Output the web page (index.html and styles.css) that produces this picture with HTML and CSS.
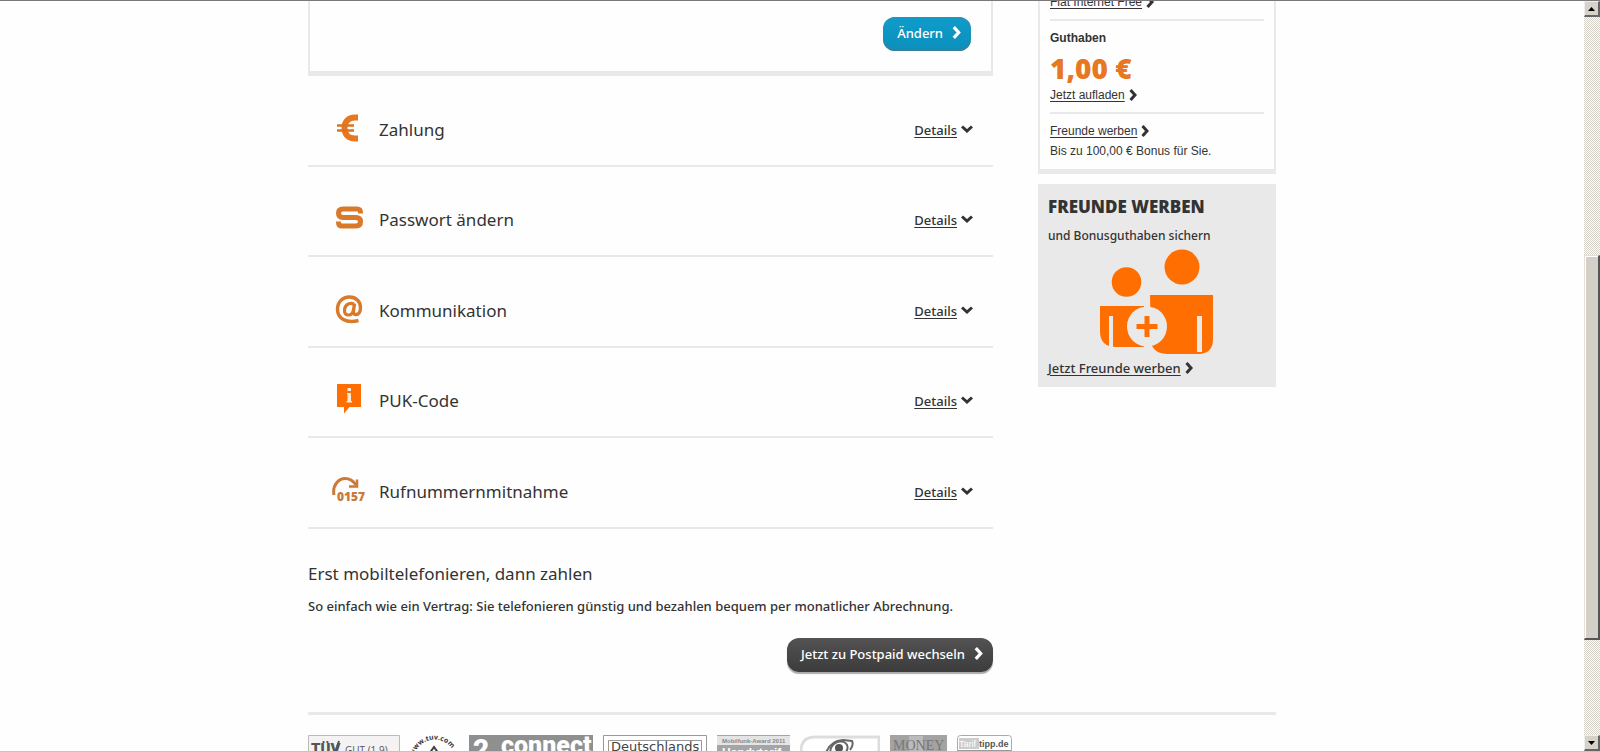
FILE: index.html
```html
<!DOCTYPE html>
<html lang="de">
<head>
<meta charset="utf-8">
<title>Meine Daten</title>
<link rel="stylesheet" href="styles.css">
</head>
<body>
<svg class="defs" aria-hidden="true">
  <symbol id="right" viewBox="0 0 8 12"><path d="M1.5 1 6 6l-4.500 5" fill="none" stroke="currentColor" stroke-width="3"/></symbol>
  <symbol id="down" viewBox="0 0 12 8"><path d="M1 1.500 6 6l5-4.500" fill="none" stroke="currentColor" stroke-width="3"/></symbol>
</svg>
<div class="window">
  <div class="viewport">
    <div class="page">
      <div class="columns">
        <main class="main">
          <section class="panel">
            <button class="btn btn-blue" type="button">Ändern <svg class="chev-btn"><use href="#right"/></svg></button>
          </section>
          <ul class="rows">
            <li class="row">
              <svg class="row-icon" viewBox="0 0 34 34"><path d="M26 6.500h-3C16 6.500 12.500 11 12.500 17S16 27.500 23 27.500h3" fill="none" stroke="#e87722" stroke-width="6"/><path d="M5 14.500h17M5 19.500h17" stroke="#d9751f" stroke-width="2.500"/></svg>
              <h2 class="row-title">Zahlung</h2>
              <a class="link" href="#"><span>Details</span><svg class="chev-down"><use href="#down"/></svg></a>
            </li>
            <li class="row">
              <svg class="row-icon" viewBox="0 0 34 34"><path d="M28.500 12.500V11.500Q28.500 8 25 8H11Q6.500 8 6.500 12 6.500 16.500 11 16.500H24Q28.500 16.500 28.500 20.500 28.500 25 24 25H10Q6.500 25 6.500 21.500V20.500" fill="none" stroke="#d97a2b" stroke-width="5"/></svg>
              <h2 class="row-title">Passwort ändern</h2>
              <a class="link" href="#"><span>Details</span><svg class="chev-down"><use href="#down"/></svg></a>
            </li>
            <li class="row">
              <svg class="row-icon" viewBox="0 0 34 34"><g fill="none" stroke="#d97a2b"><path d="M26.500 28.500C14 32 5.500 26 5.500 17.500 5.500 10 10.500 5 17.500 5 24 5 28.500 9.500 28.500 15.500 28.500 20 26.500 22.500 24 22.500 21.500 22.500 21 21 21.500 18.500L22.500 11.500" stroke-width="3.400"/><path d="M22 12C16.500 10 12.500 13.500 12.500 18.500 12.500 21.500 14 23 16.500 23 19.500 23 21 20.500 21.500 18" stroke-width="3.200"/></g></svg>
              <h2 class="row-title">Kommunikation</h2>
              <a class="link" href="#"><span>Details</span><svg class="chev-down"><use href="#down"/></svg></a>
            </li>
            <li class="row">
              <svg class="row-icon" viewBox="0 0 34 34"><path d="M5 2h24v23H17.500L12 31.500V25H5z" fill="#ff6e00"/><path d="M15.500 6h3.500v3h-3.500zM15 11h4v8h1v1.500h-5.500v-1.500h1v-6.500H15z" fill="#ffe9d4"/></svg>
              <h2 class="row-title">PUK-Code</h2>
              <a class="link" href="#"><span>Details</span><svg class="chev-down"><use href="#down"/></svg></a>
            </li>
            <li class="row">
              <svg class="row-icon" viewBox="0 0 34 34"><path d="M2 22C0 12 7 5.500 13 5.500 18 5.500 21 7.500 24 12" fill="none" stroke="#c97a3d" stroke-width="3"/><path d="M25 6.500V13.500H17" fill="none" stroke="#c97a3d" stroke-width="2.500"/><text x="5" y="28" class="num">0157</text></svg>
              <h2 class="row-title">Rufnummernmitnahme</h2>
              <a class="link" href="#"><span>Details</span><svg class="chev-down"><use href="#down"/></svg></a>
            </li>
          </ul>
          <section class="postpaid">
            <h2 class="postpaid-title">Erst mobiltelefonieren, dann zahlen</h2>
            <p class="postpaid-text">So einfach wie ein Vertrag: Sie telefonieren günstig und bezahlen bequem per monatlicher Abrechnung.</p>
            <button class="btn btn-dark" type="button">Jetzt zu Postpaid wechseln <svg class="chev-btn"><use href="#right"/></svg></button>
          </section>
        </main>
        <aside class="side">
          <div class="account">
            <div class="account-part"><a class="link" href="#"><span>Flat Internet Free</span><svg class="chev"><use href="#right"/></svg></a></div>
            <div class="account-part">
              <h3 class="account-label">Guthaben</h3>
              <strong class="amount">1,00 €</strong>
              <a class="link" href="#"><span>Jetzt aufladen</span><svg class="chev"><use href="#right"/></svg></a>
            </div>
            <div class="account-part">
              <a class="link" href="#"><span>Freunde werben</span><svg class="chev"><use href="#right"/></svg></a>
              <p class="bonus">Bis zu 100,00 € Bonus für Sie.</p>
            </div>
          </div>
          <section class="promo">
            <h3 class="promo-title">FREUNDE WERBEN</h3>
            <p class="promo-text">und Bonusguthaben sichern</p>
            <svg class="friends" viewBox="0 0 114 106" fill="#ff6e00">
              <circle cx="26.500" cy="33" r="14.800"/><circle cx="82" cy="18" r="17.500"/>
              <path d="M0 57H44V98H16Q0 98 0 82zM50 46H113V90Q113 105 98 105H68Q54 105 51 94z"/>
              <path d="M9 67h4v32H9zM97 67h5v36H97z" fill="#e9e9e9"/>
              <circle cx="47" cy="77.500" r="20" fill="#e9e9e9"/>
              <path d="M44.500 67h5v8h8v5h-8v8h-5v-8h-8v-5h8z"/>
            </svg>
            <a class="link" href="#"><span>Jetzt Freunde werben</span><svg class="chev"><use href="#right"/></svg></a>
          </section>
        </aside>
      </div>
      <footer class="logos">
        <svg class="logo" width="92" height="30"><path d="M.5.500h91v40H.5z" fill="#f4f2f2" stroke="#bbb"/><text x="3" y="19" class="tuv">TÜV</text><path d="M26 20 31 6" stroke="#555" stroke-width="2"/><text x="37" y="19" class="gut">GUT (1,9)</text></svg>
        <svg class="logo" width="49" height="30"><path id="ring" d="M4 21A21 21 0 0 1 45 21" fill="none"/><text class="ring"><textPath href="#ring">www.tuv.com</textPath></text><path d="M14 26 24 12 34 26M20 18l8 8" fill="none" stroke="#444" stroke-width="2"/></svg>
        <svg class="logo" width="124" height="30"><path d="M0 0h124v30H0z" fill="#8f8f8f"/><text x="4" y="24" class="two">2</text><text x="32" y="19" class="connect">connect</text></svg>
        <svg class="logo" width="104" height="30"><path d="M.5.500h103v40H.5zM5.500 5.500h93v40h-93z" fill="#fff" stroke="#999"/><text x="8" y="16" class="deutsch">Deutschlands</text></svg>
        <svg class="logo" width="73" height="30"><path d="M0 0h73v30H0z" fill="#e4e4e4"/><path d="M0 0h73v1H0zM0 10h73v20H0z" fill="#a5a5a5"/><text x="5" y="8" class="award">Mobilfunk-Award 2011</text><text x="5" y="22" class="award-big">Handytarif</text></svg>
        <svg class="logo" width="80" height="30"><path d="M1 30V16Q1 2 15 2H79V30" fill="#fff" stroke="#ddd" stroke-width="3"/><g fill="none" stroke="#666" stroke-width="2"><ellipse cx="39" cy="14" rx="9" ry="7" transform="rotate(-30 39 14)"/><path d="M26 18Q30 6 43 5l9 1q2 4-2 9"/></g><circle cx="39" cy="13" r="4" fill="#555"/></svg>
        <svg class="logo" width="57" height="30"><path d="M0 0h57v30H0z" fill="#a3a3a3"/><path d="M19 1h14v18H19z" fill="#bbb"/><text x="3" y="15" class="money">MONEY</text></svg>
        <svg class="logo" width="55" height="30"><rect x=".5" y=".5" width="54" height="30" rx="3" fill="#fff" stroke="#aaa"/><path d="M2 3h20v11H2z" fill="#ccc"/><path d="M1 15h53v15H1z" fill="#999"/><text x="2" y="12" class="tarif" fill="#fff">Tarif</text><text x="22" y="12" class="tarif tipp" fill="#555">tipp.de</text></svg>
      </footer>
    </div>
  </div>
  <div class="scrollbar">
    <button class="sb-btn" type="button" aria-label="Nach oben"><svg width="7" height="4"><path d="M0 4 3.500 0 7 4z"/></svg></button>
    <div class="sb-track"><div class="sb-thumb"></div></div>
    <button class="sb-btn" type="button" aria-label="Nach unten"><svg width="7" height="4"><path d="M0 0 3.500 4 7 0z"/></svg></button>
  </div>
</div>
</body>
</html>
```

FILE: styles.css
```css
* { box-sizing: border-box; margin: 0; padding: 0; }
body { background: #fefefe; color: #333; font: 500 13px/20px "Noto Sans", sans-serif; }
.defs { display: none; }
.window { display: flex; height: 100vh; overflow: hidden; border-top: 1px solid #7b777b; border-bottom: 1px solid #c4c4c4; }
.viewport { flex: 1; overflow: hidden; }
.page { max-width: 968px; margin: 0 auto; }
.columns { display: flex; align-items: flex-start; gap: 45px; }
.main { flex: 1; }
.side { width: 238px; }

.panel { display: flex; justify-content: flex-end; padding: 16px 20px 20px; border: solid #e9e9e9; border-width: 0 2px 5px; }
.btn { display: flex; align-items: center; gap: 9px; height: 34px; padding: 0 10px 2px 14px; border: 0; border-radius: 12px; color: #fff; font: inherit; }
.btn-blue { background: linear-gradient(#0f9ccb, #0c8fbb); box-shadow: inset 0 1px 1px #3d8eaa, inset 0 -2px 1px #3c7f98; }
.btn-dark { background: linear-gradient(#545252, #3c3c3c); box-shadow: 0 2px 1px #aaa; }
.chev-btn { width: 9px; height: 13px; margin-bottom: 2px; }
.chev { width: 8px; height: 12px; }
.chev-down { width: 12px; height: 8px; margin-bottom: 2px; }

.rows { list-style: none; padding-top: 1px; }
.row { display: flex; align-items: center; height: 90px; padding: 14px 20px 0 24px; border-bottom: 2px solid #e9e9e9; }
.row:nth-child(2n + 3) { height: 91px; }
.row-icon { width: 34px; height: 34px; margin-right: 13px; }
.row-title { flex: 1; padding-top: 4px; font-size: 17px; font-weight: 400; line-height: 24px; }
.row .link { padding-top: 4px; }
.link { display: flex; align-items: center; gap: 4px; color: #333; text-decoration: none; }
.link span { text-decoration: underline; text-underline-offset: 2px; }
.num { font: 800 12px "Open Sans", sans-serif; fill: #c97a3d; }

.postpaid { padding-top: 33px; }
.postpaid-title { font-size: 17px; font-weight: 400; line-height: 24px; }
.postpaid-text { padding-top: 10px; }
.btn-dark { margin: 22px 0 0 auto; }

.account { margin-top: -8px; padding: 0 10px 9px; border: solid #e9e9e9; border-width: 0 2px 5px; font: 12px/18px "Liberation Sans", sans-serif; }
.account-part + .account-part { margin-top: 8px; padding-top: 8px; border-top: 2px solid #e9e9e9; }
.account-label { font-size: 12px; }
.amount { display: block; padding: 5px 0 2px; color: #e87722; font: 800 28px/32px "Open Sans", sans-serif; }
.bonus { margin-top: 2px; }
.promo { margin-top: 10px; padding: 12px 10px 9px; background: #e9e9e9; }
.promo-title { font: 800 17px/22px "Open Sans", sans-serif; }
.promo-text { padding-top: 8px; font-size: 12px; }
.friends { display: block; width: 114px; height: 106px; margin: 3px auto 3px 52px; }

.logos { display: flex; gap: 10px; margin-top: 40px; padding-top: 20px; border-top: 3px solid #e9e9e9; }
.logo { flex: none; }
.tuv { font: 900 15px Roboto, sans-serif; fill: #555; }
.gut { font: 10px "Open Sans", sans-serif; fill: #555; }
.ring { font: 700 7px "Open Sans", sans-serif; fill: #333; }
.two { font: 900 28px Roboto, sans-serif; fill: #fff; }
.connect { font: 900 25px Roboto, sans-serif; fill: #fff; }
.deutsch { font: 13px "DejaVu Sans", sans-serif; fill: #444; }
.award { font: 700 6px "Liberation Sans", sans-serif; fill: #888; }
.award-big { font: 700 12px "Liberation Sans", sans-serif; fill: #fff; }
.money { font: 14px "Liberation Serif", serif; fill: #777; }
.tarif { font: 9px "Liberation Sans", sans-serif; }
.tipp { font-weight: 700; }

.scrollbar { display: flex; flex-direction: column; width: 16px; }
.sb-btn { display: flex; align-items: center; justify-content: center; width: 16px; height: 16px; border: solid; border-width: 1px 2px 2px 1px; border-color: #eee #666 #666 #eee; background: #d6d2ca; }
.sb-track { flex: 1; padding-top: 238px; background: repeating-conic-gradient(#d4d0c8 0 25%, #fff 0 50%) 0 0 / 2px 2px; }
.sb-thumb { height: 385px; border: solid; border-width: 1px 2px 2px 1px; border-color: #e4e0d8 #555 #555 #e4e0d8; background: #d4d0c8; box-shadow: inset 1px 1px #fff; }
```
